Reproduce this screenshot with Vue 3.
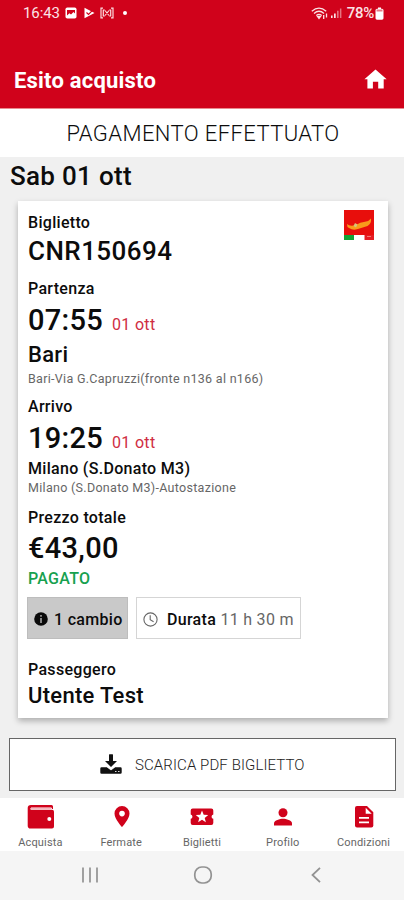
<script setup>
const tabs = [
  { id: 'wallet', label: 'Acquista' },
  { id: 'pin', label: 'Fermate' },
  { id: 'ticket', label: 'Biglietti' },
  { id: 'person', label: 'Profilo' },
  { id: 'doc', label: 'Condizioni' },
]
</script>

<template>
  <div class="screen">
    <header class="top">
      <div class="status">
        <span class="clock">16:43</span>
        <svg class="s-img" width="12" height="12" viewBox="0 0 12 12"><rect x="0.5" y="0.5" width="11" height="11" rx="1.8" fill="#fff" /><path d="M2 3h8v3.600L8.500 5 6 7.600 4.400 6.200 2 8.500z" fill="#d0021b" /></svg>
        <svg class="s-play" width="11" height="12" viewBox="0 0 11 12"><path d="M.5.8 10.500 6 .5 11.300z" fill="#fff" /><path d="m2.500 5.500 2 2L8 3.800" fill="none" stroke="#d0021b" stroke-width="1.200" /></svg>
        <svg class="s-cast" width="14" height="12" viewBox="0 0 14 12"><g fill="none" stroke="#fbdcdf" stroke-width="1.200"><path d="M3 1.200H1v9.600h2M11 1.200h2v9.600h-2M4.800 3H3.300v6h1.500M9.200 3h1.500v6H9.200M5 3.500l4 5M9 3.500l-4 5" /></g></svg>
        <i class="dot"></i>
        <span class="grow"></span>
        <svg class="s-wifi" width="18" height="13" viewBox="0 0 18 13"><g fill="none" stroke="#fbe3e5" stroke-width="1.300"><path d="M.8 4.300Q8 -2 15.200 4.300M3 6.500q5-4.500 10 0M5.300 8.600q2.700-2.400 5.400 0" /></g><path d="m6.500 9.300 1.500 2 1.500-2zM12.700 8v4M15.500 6.500v4" stroke="#fbe3e5" stroke-width="1.300" fill="#fff" /></svg>
        <svg class="s-sig" width="12" height="12" viewBox="0 0 12 12"><path d="M1 8.500h1.600V11H1zM4 6.500h1.700V11H4z" fill="#fbe3e5" /><path d="M7 3.800h1.600V11H7zM9.900 1.500h1.500V11H9.900z" fill="#fff" opacity=".45" /></svg>
        <span class="pct">78%</span>
        <svg width="9" height="13" viewBox="0 0 9 13"><path d="M3 .5h3v1.300h1q1.500 0 1.500 1.500v8q0 1.400-1.500 1.400H2Q.5 12.700.5 11.300v-8Q.5 1.800 2 1.800h1z" fill="#fff" /><path d="M1.500 2.500h6v2h-6z" fill="#e77a85" /></svg>
      </div>
      <div class="title-row">
        <h1>Esito acquisto</h1>
        <svg width="23" height="20" viewBox="0 0 23 20"><path d="M11.500.4 22.700 10.300h-3V19.500h-5.500v-6.800H8.900v6.800H3.400v-9.200h-3z" fill="#fff" /></svg>
      </div>
    </header>

    <div class="banner"><span>PAGAMENTO EFFETTUATO</span></div>

    <main>
      <h2>Sab 01 ott</h2>
      <section class="card">
        <svg class="logo" width="30" height="30" viewBox="0 0 30 30"><path d="M0 0h30v25H0z" fill="#e80e0c" /><path d="M0 25h10v5H0z" fill="#12a336" /><path d="M20.500 25H30v5h-9.500z" fill="#e51c23" /><path d="M3 14q3 3 9 1 4-3 9-3.300 4-.4 6-3.200.7 5-3.500 7.500-4 1-8 2.500-6 2.500-10.500-.5Q2.800 17 3 14z" fill="#f99a1b" /><path d="m11 13 2.500 1.500-1.500 3-2.500-1.500z" fill="#d8c47a" /><path d="M23 26.500h4" stroke="#f27a75" /></svg>
        <div class="label">Biglietto</div>
        <div class="code">CNR150694</div>
        <div class="label dep">Partenza</div>
        <div class="time t-dep"><b>07:55</b><span>01 ott</span></div>
        <div class="city">Bari</div>
        <div class="address a-dep">Bari-Via G.Capruzzi(fronte n136 al n166)</div>
        <div class="label arr">Arrivo</div>
        <div class="time t-arr"><b>19:25</b><span>01 ott</span></div>
        <div class="label stop">Milano (S.Donato M3)</div>
        <div class="address">Milano (S.Donato M3)-Autostazione</div>
        <div class="label total">Prezzo totale</div>
        <div class="price">€43,00</div>
        <div class="paid">PAGATO</div>
        <div class="chips">
          <div class="chip change">
            <svg width="14" height="14" viewBox="0 0 14 14"><circle cx="7" cy="7" r="6.800" fill="#0a0a0a" /><path d="M7 3v1.700M7 6v5" stroke="#a5a5a5" stroke-width="1.600" /></svg>
            <b>1 cambio</b>
          </div>
          <div class="chip duration">
            <svg width="15" height="15" viewBox="0 0 15 15"><g fill="none" stroke="#666" stroke-width="1.100"><circle cx="7.500" cy="7.500" r="6.600" /><path d="M7.200 3.300v4.500l3.400 2" /></g></svg>
            <span><b>Durata</b> 11 h 30 m</span>
          </div>
        </div>
        <div class="label">Passeggero</div>
        <div class="name">Utente Test</div>
      </section>
      <button class="download">
        <svg width="22" height="21" viewBox="0 0 22 21"><path d="M9 .8q0-.5.500-.5h3q.5 0 .5.500V7h4L11 13 5 7h4z" fill="#111" /><path d="M1.500 13.200h5.600L11 16l3.900-2.800h5.600q1.200 0 1.200 1.200v4.100q0 1.200-1.200 1.200h-19q-1.200 0-1.200-1.200v-4.100q0-1.200 1.200-1.200z" fill="#111" /><path d="M7 12.800 11 16l4-3.200" fill="none" stroke="#fff" stroke-width=".8" /><path d="M15 17.500h1.500M18 17.500h1.500" stroke="#ddd" stroke-width="1.200" /></svg>
        <span>SCARICA PDF BIGLIETTO</span>
      </button>
    </main>

    <nav class="tabs">
      <div v-for="t in tabs" :key="t.id" class="tab">
        <svg v-if="t.id === 'wallet'" width="28" height="26" viewBox="0 0 28 26"><path d="M4 1h20.500q1.500 0 1.500 1.500V5h-1V4H4.500q-1.300 0-1.300.8T4.500 5.700H25q2 0 2 2v14.800q0 2-2 2H3.500q-2.800 0-2.800-2.800V4Q.7 1 4 1z" fill="#d0021b" /><path d="M4 3.300H24.500v2.200H4z" fill="#f4b6bd" /><circle cx="22.300" cy="15" r="2" fill="#fff" /></svg>
        <svg v-else-if="t.id === 'pin'" width="28" height="26" viewBox="0 0 28 26"><path d="M14 2a7.500 7.500 0 0 0-7.500 7.500C6.500 15 14 23 14 23s7.500-8 7.500-13.500A7.500 7.500 0 0 0 14 2z" fill="#d0021b" /><circle cx="14" cy="9.600" r="2.800" fill="#fff" /></svg>
        <svg v-else-if="t.id === 'ticket'" width="28" height="26" viewBox="0 0 28 26"><path d="M4.700 4.500h18.600q2 0 2 2v4a2.200 2.200 0 0 0 0 4.300v4.200q0 2-2 2H4.700q-2 0-2-2v-4.200a2.200 2.200 0 0 0 0-4.300v-4q0-2 2-2z" fill="#d0021b" /><path d="m14 6.500 1.700 4.200 4.500.3-3.500 2.900 1.200 4.400-3.900-2.500-3.900 2.500 1.200-4.400L7.800 11l4.500-.3z" fill="#fff" /></svg>
        <svg v-else-if="t.id === 'person'" width="28" height="26" viewBox="0 0 28 26"><circle cx="14" cy="8.700" r="4.500" fill="#d0021b" /><path d="M5 21.500v-2.200c0-3 6-4.600 9-4.600s9 1.600 9 4.600v2.200z" fill="#d0021b" /></svg>
        <svg v-else width="28" height="26" viewBox="0 0 28 26"><path d="M7 2h10l6.300 6.300v13.200q0 2-2 2H7q-2 0-2-2V4q0-2 2-2z" fill="#d0021b" /><path d="M15.700 3.800v6h6zM9 13h10v1.800H9zM9 17.500h10v1.800H9z" fill="#fff" /></svg>
        <span>{{ t.label }}</span>
      </div>
    </nav>

    <footer class="sys">
      <svg width="18" height="18" viewBox="0 0 18 18"><path d="M2 1.500v15M9 1.500v15M16 1.500v15" stroke="#929292" stroke-width="1.700" /></svg>
      <svg class="home" width="20" height="20" viewBox="0 0 20 20"><rect x="1.800" y="2" width="16.400" height="16" rx="7" fill="none" stroke="#929292" stroke-width="1.700" /></svg>
      <svg width="12" height="18" viewBox="0 0 12 18"><path d="M10 1.800 2.500 9l7.500 7.200" fill="none" stroke="#929292" stroke-width="1.800" /></svg>
    </footer>
  </div>
</template>

<style>
body { margin: 0; background: #f0f0f0; }
</style>

<style scoped>
.screen {
  width: 404px;
  height: 900px;
  display: flex;
  flex-direction: column;
  overflow: hidden;
  background: #f0f0f0;
  color: #0c0c0c;
  font-family: Roboto, "Liberation Sans", sans-serif;
  letter-spacing: 0.3px;
  white-space: nowrap;
}
svg { display: block; flex: none; }
b, h1, h2 { margin: 0; font-weight: 500; }
.top { height: 108px; background: #d0021b; color: #fff; border-bottom: 1px solid #e98a8f; flex: none; }
.status { display: flex; align-items: center; height: 26px; padding: 0 20px 0 23px; color: #fbe3e5; font-size: 15px; }
.clock { width: 42px; letter-spacing: -0.1px; }
.s-play { margin-left: 7px; }
.s-cast { margin-left: 5px; }
.dot { width: 4px; height: 4px; margin-left: 9px; border-radius: 50%; background: #fff; }
.grow { flex: 1; }
.s-sig { margin-left: 1px; }
.pct { margin: 0 1px 0 5px; letter-spacing: -0.3px; font-weight: 500; }
.title-row { display: flex; align-items: center; justify-content: space-between; height: 54px; margin-top: 26px; padding: 0 17px 0 14px; }
h1 { padding-top: 4px; font-size: 22px; font-weight: 700; line-height: 54px; letter-spacing: 0.2px; }
.banner { display: flex; align-items: center; justify-content: center; height: 48px; padding-left: 2px; background: #fff; font-size: 22px; font-weight: 300; letter-spacing: 0.4px; flex: none; }
main { padding: 0 8px 0 9px; height: 641px; flex: none; }
h2 { height: 38px; line-height: 38px; margin-bottom: 6px; padding-left: 1px; font-size: 26px; }
.card { position: relative; box-sizing: border-box; height: 517px; margin: 0 8px 0 9px; padding: 12px 9px 0 10px; background: #fff; box-shadow: 0 3px 6px rgba(0, 0, 0, .28); }
.logo { position: absolute; top: 9px; right: 14px; }
.label { height: 20px; line-height: 20px; font-size: 16px; font-weight: 500; }
.code { height: 30px; line-height: 30px; margin-top: 3px; font-size: 26px; font-weight: 500; letter-spacing: 0.45px; }
.dep { margin-top: 13px; }
.time { display: flex; align-items: baseline; gap: 9px; height: 32px; line-height: 32px; }
.time b { font-size: 29px; }
.time span { font-size: 16px; color: #cf2d42; }
.t-dep { margin-top: 5px; }
.city { height: 22px; line-height: 22px; margin-top: 8px; font-size: 22px; font-weight: 500; }
.address { height: 18px; line-height: 18px; font-size: 12.5px; color: #666; }
.a-dep { margin-top: 4px; }
.arr { margin-top: 9px; }
.t-arr { margin-top: 5px; }
.stop { margin-top: 5px; }
.total { margin-top: 11px; }
.price { height: 32px; line-height: 32px; margin-top: 4px; font-size: 29px; font-weight: 500; }
.paid { height: 20px; line-height: 20px; margin-top: 5px; font-size: 16px; font-weight: 500; color: #17a14f; }
.chips { display: flex; gap: 8px; height: 42px; margin: 8px 0 21px -1px; }
.chip { box-sizing: border-box; display: flex; align-items: center; padding-top: 2px; font-size: 16px; color: #666; }
.chip b { color: #0c0c0c; }
.change { width: 101px; padding-left: 6px; gap: 6px; background: #c9c9c9; border: 1px solid #bdbdbd; }
.duration { width: 165px; padding-left: 6px; gap: 9px; border: 1.500px solid #d5d5d5; }
.name { height: 26px; line-height: 26px; margin-top: 3px; font-size: 22px; font-weight: 500; }
.download { box-sizing: border-box; display: flex; align-items: center; width: 387px; height: 53px; margin: 20px 0 0; padding: 0 0 0 90px; gap: 13px; border: 1px solid #666; background: #fff; font: 300 15px Roboto, sans-serif; letter-spacing: 0.1px; color: #222; }
.tabs { display: grid; grid-template-columns: repeat(5, 80.8px); height: 53px; background: #fff; flex: none; }
.tab { display: flex; flex-direction: column; align-items: center; padding-top: 6px; font-size: 11px; line-height: 14px; letter-spacing: 0.15px; color: #666; }
.tab span { margin-top: 6px; }
.tab svg { margin-left: 1px; }
.sys { display: flex; align-items: center; height: 50px; padding: 0 82px 2px 81px; justify-content: space-between; background: #f5f5f5; flex: none; box-sizing: border-box; }
.home { margin-right: 4px; }
</style>
